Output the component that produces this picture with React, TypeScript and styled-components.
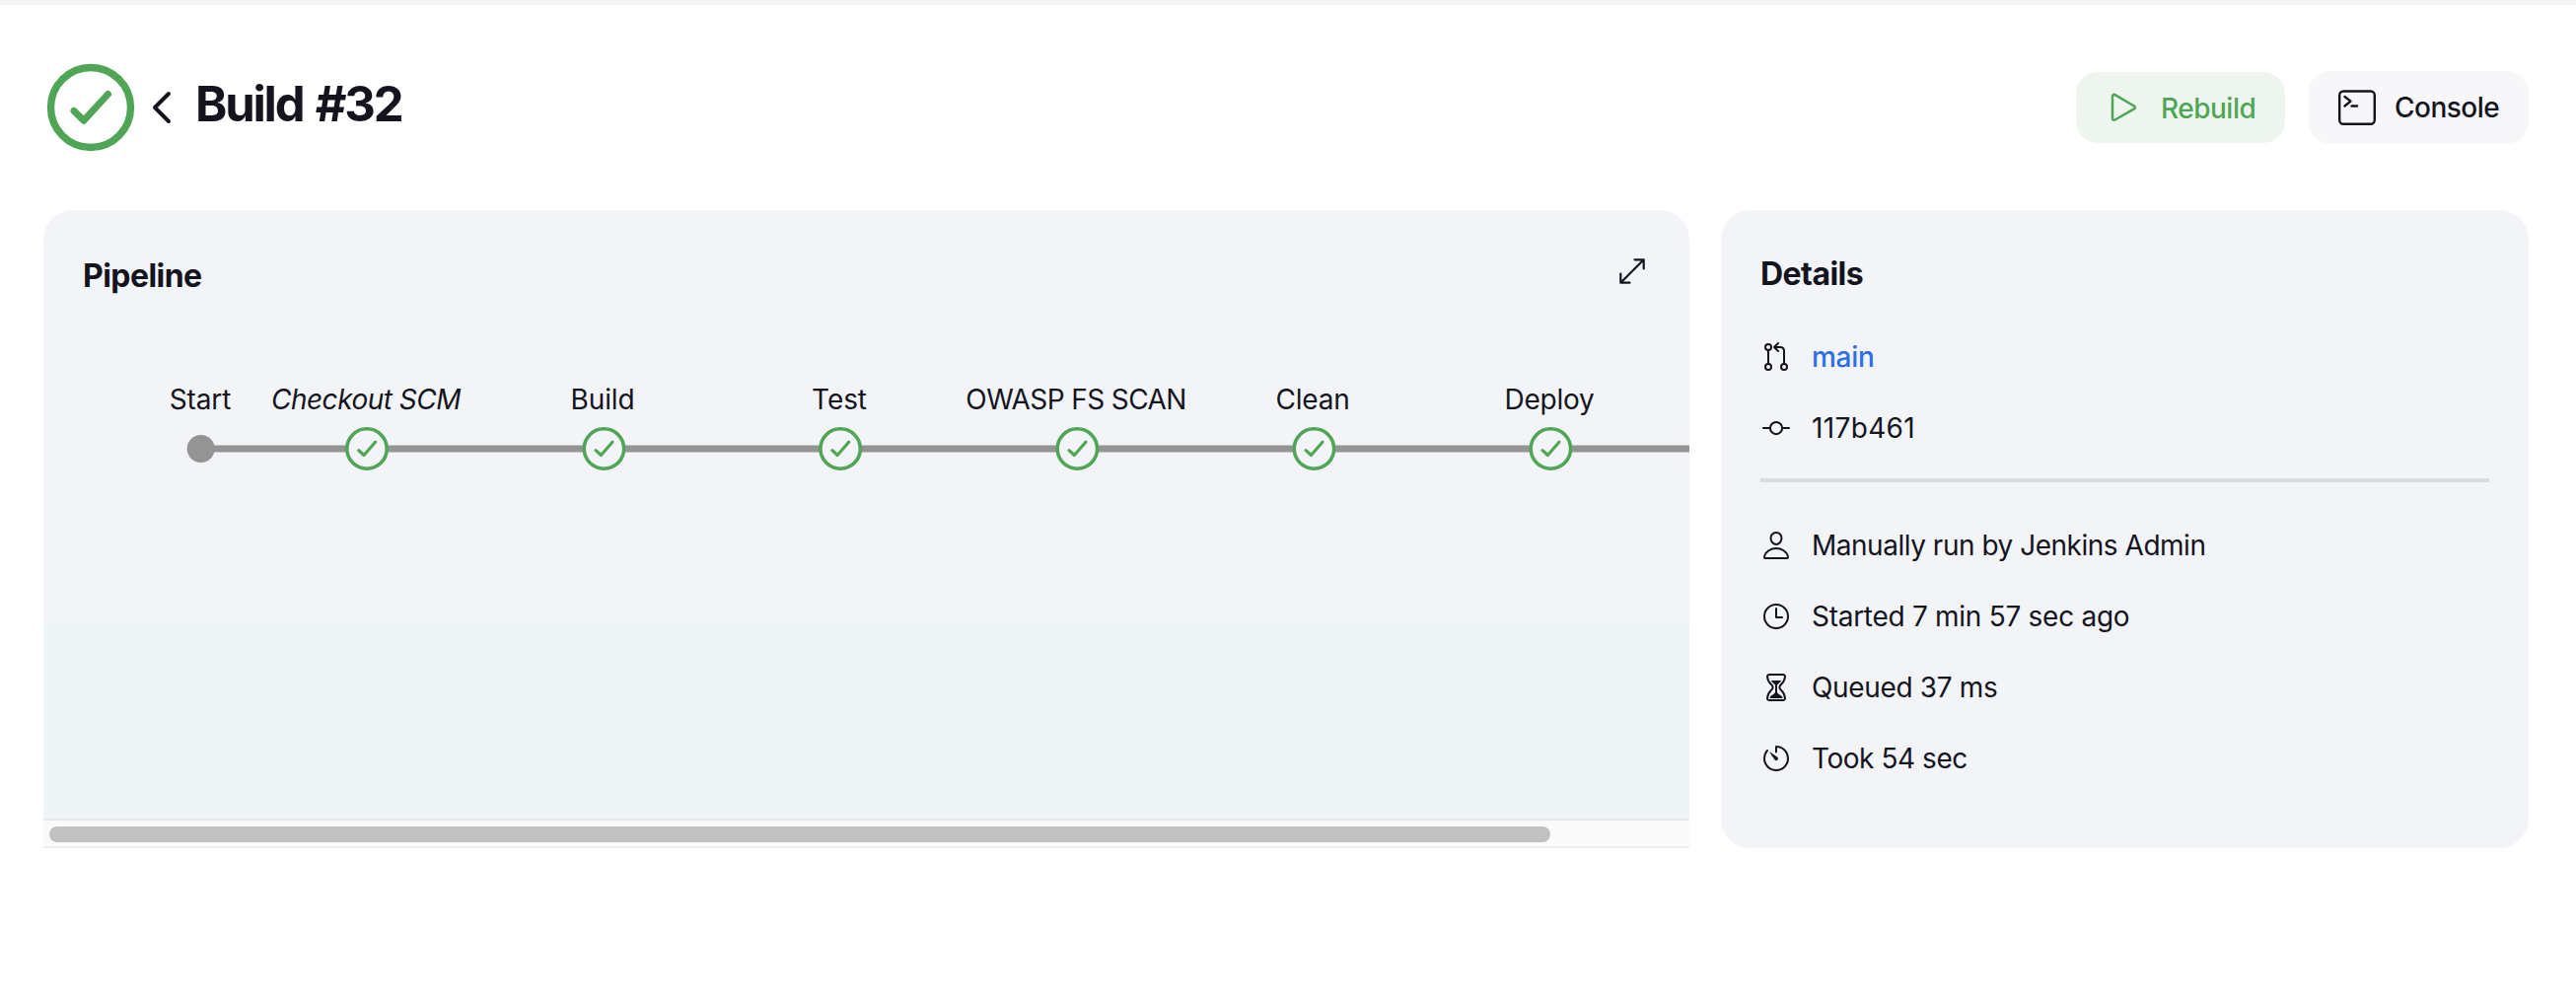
import React from "react";
import styled, { createGlobalStyle } from "styled-components";

const INK = "#14141f";
const GREEN = "#50a557";

const GlobalStyle = createGlobalStyle`
  * { box-sizing: border-box; }
  body {
    margin: 0;
    background: #fff;
    color: ${INK};
    font-family: Inter, "Liberation Sans", sans-serif;
    overflow: hidden;
  }
  h1, h2 { margin: 0; }
  svg { display: block; flex: none; }
`;

const Page = styled.div`
  height: 1018px;
  border-top: 5px solid #f5f5f8;
  padding: 59px 48px 0 44px;
`;

const Header = styled.header`
  display: flex;
  align-items: center;
  justify-content: space-between;
  height: 90px;
`;

const HeaderLeft = styled.div`
  display: flex;
  align-items: center;
`;

const BackLink = styled.a`
  margin-left: 18px;
  color: ${INK};
`;

const Title = styled.h1`
  margin: -6px 0 0 24px;
  font-size: 49px;
  line-height: 60px;
  font-weight: 700;
  letter-spacing: -2.2px;
  word-spacing: 3px;
  white-space: nowrap;
`;

const Actions = styled.div`
  display: flex;
  align-items: center;
  gap: 24px;
`;

const ActionButton = styled.button<{ $primary?: boolean }>`
  display: flex;
  align-items: center;
  height: ${(p) => (p.$primary ? 72 : 74)}px;
  width: ${(p) => (p.$primary ? 212 : 223)}px;
  padding: 0 0 0 ${(p) => (p.$primary ? 34 : 30)}px;
  gap: ${(p) => (p.$primary ? 24 : 19)}px;
  border: 0;
  border-radius: 22px;
  background: ${(p) => (p.$primary ? "#edf5ee" : "#f7f7f9")};
  color: ${(p) => (p.$primary ? GREEN : INK)};
  font-family: inherit;
  font-size: 28px;
  font-weight: 500;
  letter-spacing: -0.5px;
  white-space: nowrap;
`;

const ButtonLabel = styled.span<{ $drop?: number }>`
  padding-top: ${(p) => p.$drop ?? 0}px;
`;

const Columns = styled.main`
  display: flex;
  gap: 32px;
  margin-top: 59px;
`;

const PipelineCard = styled.section`
  display: flex;
  flex-direction: column;
  width: 1669px;
  height: 647px;
  border-radius: 30px 30px 0 0;
  background: linear-gradient(#f3f4f8 0 416px, #eff4f7 416px);
  overflow: hidden;
`;

const DetailsCard = styled.section`
  width: 819px;
  height: 647px;
  padding: 45px 40px 0;
  border-radius: 30px;
  background: #f3f4f8;
`;

const CardHead = styled.div`
  display: flex;
  align-items: flex-start;
  justify-content: space-between;
  padding: 47px 45px 0 40px;

  svg { margin-top: 2px; }
`;

const CardTitle = styled.h2`
  font-size: 32px;
  line-height: 40px;
  font-weight: 700;
  letter-spacing: -0.55px;
`;

const Graph = styled.div`
  position: relative;
  margin-top: 86px;
  height: 120px;
`;

const Track = styled.div`
  position: absolute;
  left: 160px;
  right: 0;
  top: 65px;
  height: 8px;
  border: solid #c3c4c6;
  border-width: 1px 0;
  background: #949494;
`;

const Stage = styled.div<{ $x: number }>`
  position: absolute;
  top: 0;
  left: ${(p) => p.$x}px;
  display: flex;
  flex-direction: column;
  align-items: center;
  transform: translateX(-50%);
`;

const StageName = styled.span<{ $italic?: boolean; $tracking?: number }>`
  height: 47px;
  margin: 0 1px 0 -1px;
  font-size: 28px;
  line-height: 38px;
  font-style: ${(p) => (p.$italic ? "italic" : "normal")};
  letter-spacing: ${(p) => p.$tracking ?? 0}px;
  white-space: nowrap;
`;

const StartDot = styled.span`
  width: 28px;
  height: 28px;
  margin-top: 8px;
  border-radius: 50%;
  background: #949494;
`;

const ScrollBar = styled.div`
  display: flex;
  align-items: center;
  height: 30px;
  margin-top: auto;
  padding-left: 6px;
  border-top: 2px solid #e8e8e8;
  border-bottom: 2px solid #ededed;
  background: #fafafa;
`;

const Thumb = styled.div`
  width: 1522px;
  height: 16px;
  margin-top: 2px;
  border-radius: 8px;
  background: #c1c1c1;
`;

const DetailRow = styled.div<{ $tracking?: number }>`
  display: flex;
  align-items: center;
  gap: 20px;
  height: 72px;
  font-size: 28px;
  letter-spacing: ${(p) => p.$tracking ?? 0}px;
  white-space: nowrap;
`;

const DetailList = styled.div`
  margin-top: 28px;
`;

const BranchLink = styled.a`
  color: #2d6fe6;
  font-weight: 500;
`;

const Divider = styled.hr`
  height: 4px;
  margin: 15px 0 0;
  border: 0;
  background: #d9dbe3;
`;

const stages = [
  { name: "Checkout SCM", x: 328, italic: true, tracking: -0.5 },
  { name: "Build", x: 568, tracking: -0.1 },
  { name: "Test", x: 808, tracking: -0.1 },
  { name: "OWASP FS SCAN", x: 1048, tracking: -0.6 },
  { name: "Clean", x: 1288, tracking: -0.2 },
  { name: "Deploy", x: 1528, tracking: -0.2 },
];

const line = {
  fill: "none",
  stroke: "currentColor",
  strokeWidth: 32,
  strokeLinecap: "round" as const,
  strokeLinejoin: "round" as const,
};

function DetailIcon({ children }: { children: React.ReactNode }) {
  return (
    <svg width="32" height="32" viewBox="0 0 512 512" {...line}>
      {children}
    </svg>
  );
}

function StageMark() {
  return (
    <svg width="44" height="44" viewBox="0 0 44 44" fill="none" stroke={GREEN}>
      <circle cx="22" cy="22" r="20.2" fill="#f3f4f8" strokeWidth="3.6" />
      <path d="M13.7 23.6 19 28.5 30.6 15.3" strokeWidth="3.2" strokeLinecap="round" strokeLinejoin="round" />
    </svg>
  );
}

export default function App() {
  return (
    <>
      <GlobalStyle />
      <Page>
        <Header>
          <HeaderLeft>
            <svg width="96" height="90" viewBox="0 0 96 90" fill="none" stroke={GREEN}>
              <circle cx="48" cy="45" r="40.5" strokeWidth="7.4" />
              <path d="M31 48.5 41 58.2 65.5 31.5" strokeWidth="7" strokeLinecap="round" strokeLinejoin="round" />
            </svg>
            <BackLink>
              <svg width="16" height="34" viewBox="0 0 16 34" fill="none" stroke="currentColor" strokeWidth="4" strokeLinecap="round" strokeLinejoin="round" overflow="visible">
                <path d="M13 3-1 17 13 31" />
              </svg>
            </BackLink>
            <Title>Build #32</Title>
          </HeaderLeft>
          <Actions>
            <ActionButton $primary>
              <svg width="28" height="32" viewBox="0 0 28 32" fill="none" stroke="currentColor" strokeWidth="2.5" strokeLinejoin="round">
                <path d="M3 4.6v22.4c0 1.6 1.4 2.2 2.6 1.5L25 17.3c1.2-.7 1.2-2.1 0-2.8L5.6 3.2C4.4 2.5 3 3 3 4.6Z" />
              </svg>
              <ButtonLabel $drop={2}>Rebuild</ButtonLabel>
            </ActionButton>
            <ActionButton>
              <svg width="38" height="36" viewBox="0 0 38 36" fill="none" stroke="currentColor" strokeWidth="2.4" strokeLinecap="round" strokeLinejoin="round">
                <rect x="1.2" y="1.5" width="35.6" height="33.2" rx="4" />
                <path d="M6.5 7 12.5 11.6 6.5 16.5M13.5 16.5h5.5" />
              </svg>
              <ButtonLabel>Console</ButtonLabel>
            </ActionButton>
          </Actions>
        </Header>
        <Columns>
          <PipelineCard>
            <CardHead>
              <CardTitle>Pipeline</CardTitle>
              <svg width="26" height="26" viewBox="0 0 26 26" fill="none" stroke={INK} strokeWidth="2.2" strokeLinecap="round" strokeLinejoin="round">
                <path d="M1.5 24.5 24.5 1.5M15.5 1.3h9.2v9.2M10.5 24.7H1.3v-9.2" />
              </svg>
            </CardHead>
            <Graph>
              <Track />
              <Stage $x={160}>
                <StageName $tracking={-0.1}>Start</StageName>
                <StartDot />
              </Stage>
              {stages.map((s) => (
                <Stage key={s.name} $x={s.x}>
                  <StageName $italic={s.italic} $tracking={s.tracking}>{s.name}</StageName>
                  <StageMark />
                </Stage>
              ))}
            </Graph>
            <ScrollBar>
              <Thumb />
            </ScrollBar>
          </PipelineCard>
          <DetailsCard>
            <CardTitle>Details</CardTitle>
            <DetailList>
              <DetailRow $tracking={-0.3}>
                <DetailIcon>
                  <circle cx="128" cy="96" r="48" />
                  <circle cx="128" cy="416" r="48" />
                  <circle cx="384" cy="416" r="48" />
                  <path d="M128 144v224M384 368V160c0-40-24-64-64-64H232M288 32l-64 64 64 64" />
                </DetailIcon>
                <BranchLink>main</BranchLink>
              </DetailRow>
              <DetailRow $tracking={0.35}>
                <DetailIcon>
                  <circle cx="256" cy="256" r="98" />
                  <path d="M158 256H48M464 256H354" />
                </DetailIcon>
                117b461
              </DetailRow>
            </DetailList>
            <Divider />
            <DetailList>
              <DetailRow $tracking={-0.48}>
                <DetailIcon>
                  <path d="M344 144c-3.9 52.9-44 96-88 96s-84.2-43.1-88-96c-4-55 35-96 88-96s92 42 88 96Z" />
                  <path d="M256 304c-87 0-175.3 48-191.6 138.6C62.4 453.5 68.6 464 80 464h352c11.4 0 17.6-10.5 15.6-21.4C431.3 352 343 304 256 304Z" />
                </DetailIcon>
                Manually run by Jenkins Admin
              </DetailRow>
              <DetailRow $tracking={-0.28}>
                <DetailIcon>
                  <circle cx="256" cy="256" r="192" />
                  <path d="M256 128v144h96" />
                </DetailIcon>
                Started 7 min 57 sec ago
              </DetailRow>
              <DetailRow $tracking={-0.35}>
                <DetailIcon>
                  <path d="M145.6 464h220.8c19.8 0 35.5-16.3 33.4-35.6C386.3 304 310 310 310 256s77.5-51 89.8-172.3c2-19.3-13.6-35.7-33.4-35.7H145.6c-19.8 0-35.4 16.4-33.4 35.7C124.5 205 202 202 202 256s-76.3 48-89.8 172.4c-2.1 19.3 13.6 35.6 33.4 35.6Z" />
                  <path stroke="none" fill="currentColor" d="M343.3 432H169.1c-15.6 0-20-18-9.1-29.2C186.5 376 240 356.8 240 326V224c0-19.9-38-35-61.7-67.4-3.9-5.4-3.7-12.6 6.4-12.6h142.7c8.4 0 10.2 7.2 6.3 12.5C310 189 272 204 272 224v102c0 30.5 56 49 82.4 76.9 9.9 10.4 4.4 29.1-11.1 29.1Z" />
                </DetailIcon>
                Queued 37 ms
              </DetailRow>
              <DetailRow $tracking={-0.45}>
                <DetailIcon>
                  <path d="M112.9 128.9C82 160 64 205 64 256c0 106 86 192 192 192s192-86 192-192S361.5 64 256 64v86.6" />
                  <path stroke="none" fill="currentColor" d="m233.4 278.6-78.7-113.1c-3-4.5-2-7 0-9s5-3 9-.5l113.6 78.2a31.3 31.3 0 1 1-43.9 44.4Z" />
                </DetailIcon>
                Took 54 sec
              </DetailRow>
            </DetailList>
          </DetailsCard>
        </Columns>
      </Page>
    </>
  );
}
